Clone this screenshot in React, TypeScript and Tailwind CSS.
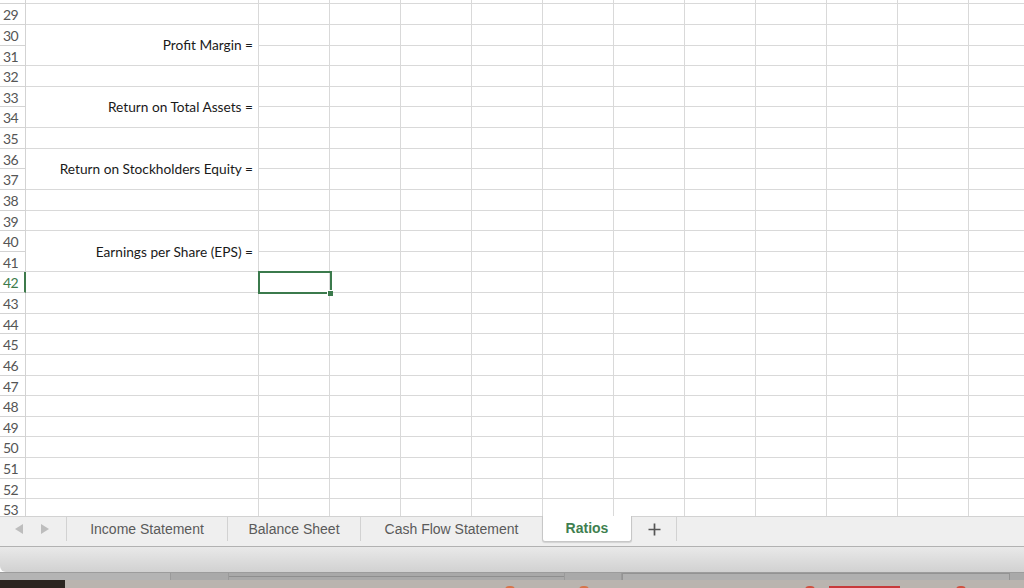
const rows = Array.from({ length: 26 }, (_, i) => 28 + i);

const labels: Record<number, string> = {
  30: "Profit Margin =",
  33: "Return on Total Assets =",
  36: "Return on Stockholders Equity =",
  40: "Earnings per Share (EPS) =",
};

// second half of a merged A-cell: no cell of its own
const mergedTail = new Set([31, 34, 37, 41]);

const cols = Array.from({ length: 11 }, (_, i) => i);

const tabs = [
  { name: "Income Statement", w: "w-[161px]", sep: true },
  { name: "Balance Sheet", w: "w-[133px]", sep: true },
  { name: "Cash Flow Statement", w: "w-[181px]", sep: false },
];

function Sheet() {
  return (
    <div className="h-[516px] overflow-hidden">
      <div
        className="-mt-[16.3px] grid grid-cols-[26px_233px_repeat(11,71px)] auto-rows-[20.625px] font-['Lato',sans-serif]"
      >
        {rows.map((r) => {
          const active = r === 42;
          return [
            <div
              key={`h${r}`}
              className={
                active
                  ? "pl-[3px] pt-[6px] text-[14px] leading-[10px] tracking-[-0.6px] text-[#3d7a4b] border-b border-[#d6d6d6] border-r-2 border-r-[#3d7a4b]"
                  : "pl-[3px] pt-[6px] text-[14px] leading-[10px] tracking-[-0.6px] text-[#555] border-b border-r border-[#d3d3d3]"
              }
            >
              {r === 28 ? "" : r}
            </div>,
            mergedTail.has(r) ? null : (
              <div
                key={`a${r}`}
                className={
                  labels[r]
                    ? "row-span-2 flex items-center justify-end pr-[5px] pt-px text-[13.7px] text-[#1a1a1a] whitespace-nowrap border-b border-r border-[#d9d9d9]"
                    : "border-b border-r border-[#d9d9d9]"
                }
              >
                {labels[r]}
              </div>
            ),
            ...cols.map((c) => (
              <div key={`c${r}-${c}`} className="border-b border-r border-[#d9d9d9]" />
            )),
          ];
        })}
      </div>
    </div>
  );
}

function TabBar() {
  return (
    <div className="h-[31px] flex items-start bg-[#efefef] border-t border-[#d2d2d2] border-b border-b-[#b2b2b2] font-['Liberation_Sans',Arial,sans-serif] text-[14px] text-[#5a5a5a]">
      <div className="w-[67px] h-[24px] flex items-center pl-[15px] gap-[18px] border-r border-[#d2d2d2]">
        <svg width="8" height="10" viewBox="0 0 8 10">
          <path d="M8 0 L0 5 L8 10 Z" fill="#bdbdbd" />
        </svg>
        <svg width="8" height="10" viewBox="0 0 8 10">
          <path d="M0 0 L8 5 L0 10 Z" fill="#bdbdbd" />
        </svg>
      </div>
      {tabs.map((t) => (
        <div
          key={t.name}
          className={`${t.w} h-[24px] flex items-center justify-center ${t.sep ? "border-r border-[#d2d2d2]" : ""}`}
        >
          {t.name}
        </div>
      ))}
      <div className="-mt-px w-[90px] h-[26px] flex items-center justify-center bg-white border-x border-b border-[#c7c7c7] rounded-b-[3px] shadow-[0_1px_1px_rgba(0,0,0,0.12)] font-bold text-[#3f7f50]">
        Ratios
      </div>
      <div className="w-[45px] h-[24px] flex items-center justify-center border-r border-[#d2d2d2]">
        <svg width="13" height="13" viewBox="0 0 13 13">
          <path d="M6.5 0.5 V12.5 M0.5 6.5 H12.5" stroke="#555" strokeWidth="1.7" />
        </svg>
      </div>
    </div>
  );
}

function WindowBottom() {
  return (
    <div className="flex flex-col">
      <div className="h-[25px] bg-gradient-to-b from-[#e9e9e9] to-[#d1d1d1] rounded-bl-[6px]" />
      <div className="h-[8px] flex bg-[#a9a9a9] border-t border-[#9c9c9c]">
        <div className="w-[170px] bg-[#b4b4b4]" />
        <div className="w-[59px] border-x border-[#9a9a9a]" />
        <div className="w-[335px] flex items-start pt-[2px]">
          <div className="w-full h-[2px] border-b border-[#8e8e8e]" />
        </div>
        <div className="w-[58px] border-x border-[#9a9a9a]" />
        <div className="w-[388px] bg-[#b0b0b0] border-x border-t border-[#939393]" />
      </div>
      <div className="relative h-[8px] flex bg-[#bab4af]">
        <div className="w-[65px] bg-[#2b2520]" />
        <div className="absolute left-[505px] top-[6px] w-[10px] h-[4px] rounded-t-full bg-[#d7744a]" />
        <div className="absolute left-[579px] top-[6px] w-[10px] h-[4px] rounded-t-full bg-[#d7744a]" />
        <div className="absolute left-[805px] top-[6px] w-[10px] h-[4px] rounded-t-full bg-[#d0503f]" />
        <div className="absolute left-[829px] top-[6px] w-[71px] h-[2px] bg-[#c8393a]" />
        <div className="absolute left-[956px] top-[6px] w-[10px] h-[4px] rounded-t-full bg-[#d0503f]" />
      </div>
    </div>
  );
}

export default function App() {
  return (
    <div className="relative w-[1024px] h-[588px] overflow-hidden bg-white">
      <Sheet />
      <TabBar />
      <WindowBottom />
      {/* selected cell B42 */}
      <div className="absolute left-[258px] top-[271px] w-[74px] h-[23px] border-2 border-[#3b7a4c]" />
      <div className="absolute left-[327px] top-[290px] w-[6px] h-[6px] bg-[#3b7a4c] border-t border-l border-white" />
    </div>
  );
}
